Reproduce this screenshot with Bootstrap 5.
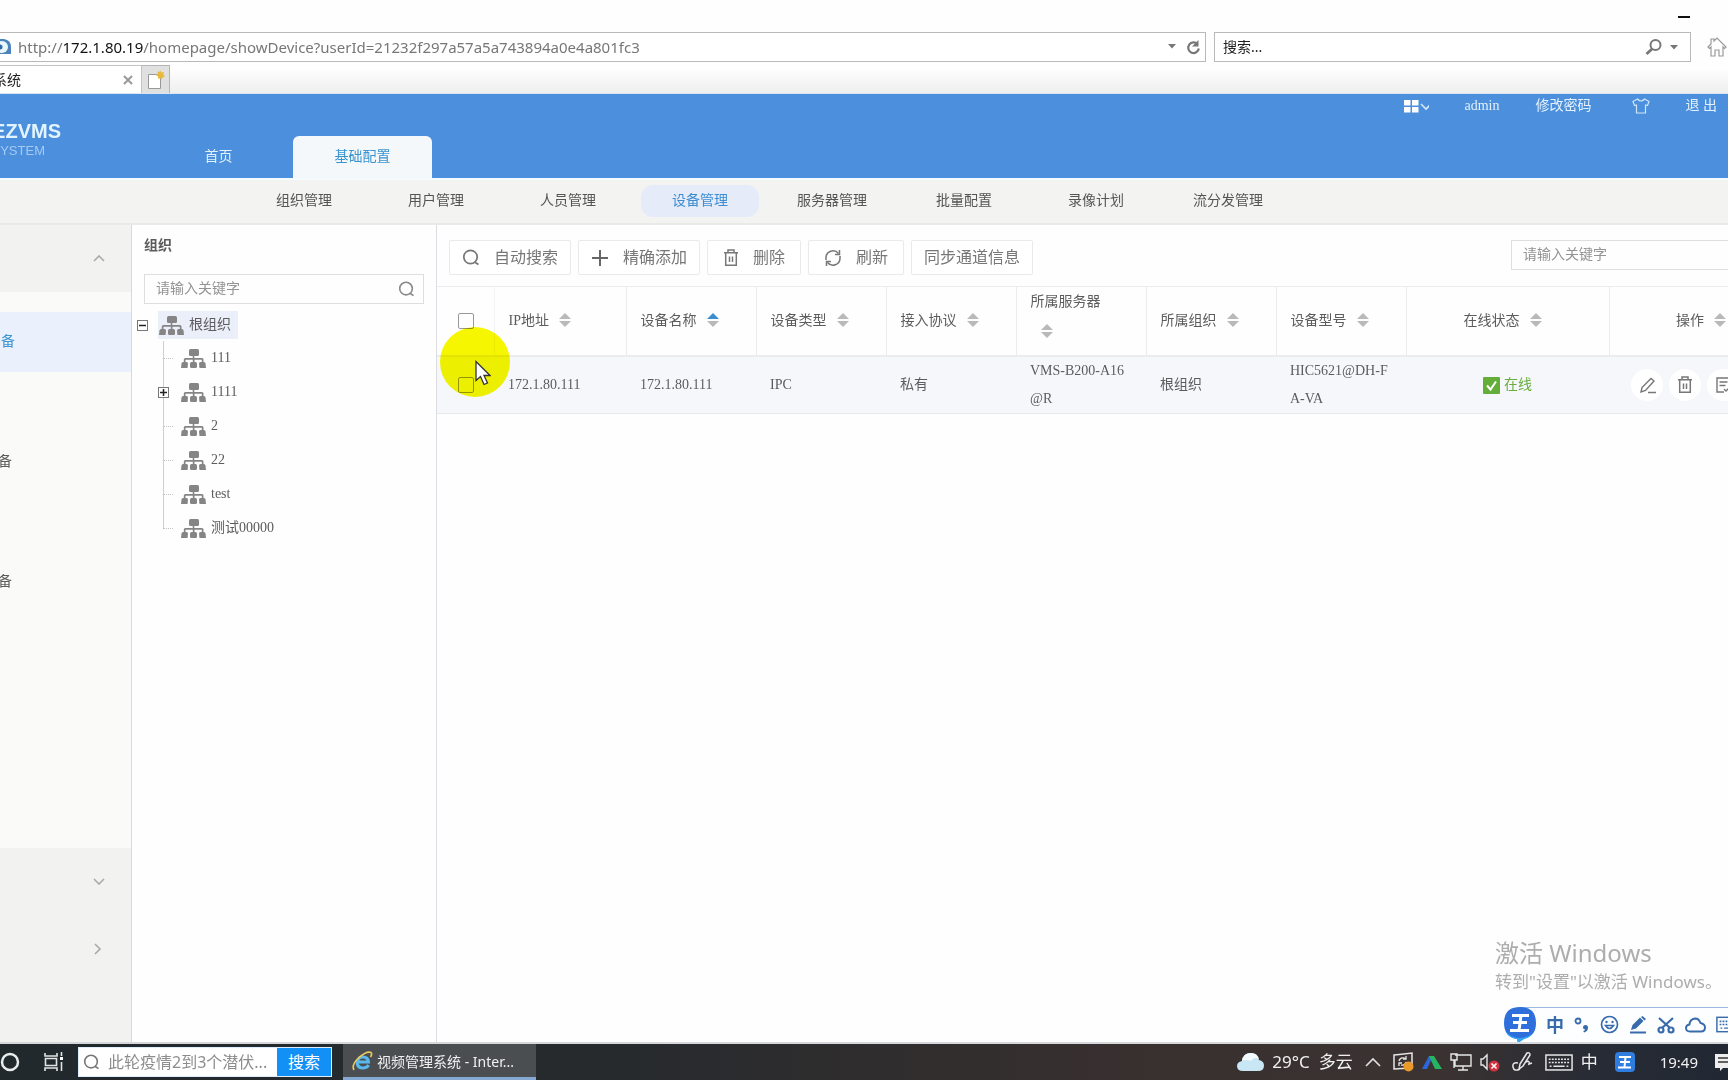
<!DOCTYPE html>
<html lang="zh-CN">
<head>
<meta charset="utf-8">
<meta name="viewport" content="width=device-width, initial-scale=1">
<title>视频管理系统</title>
<link href="https://cdn.jsdelivr.net/npm/bootstrap@5.3.0/dist/css/bootstrap.min.css" rel="stylesheet">
<style>
:root{--ui:"Noto Sans","Noto Sans CJK SC",sans-serif;--web:"Liberation Serif","Noto Sans CJK SC",serif;}
body{font-family:var(--web);font-size:14px;line-height:20px;color:#5c5c5c;background:#fefefe;overflow:hidden}
svg{display:block;flex:none}
a{text-decoration:none;color:inherit}
.plain-btn{border:0;background:none;padding:0;color:inherit}
/* browser chrome */
.chrome{font-family:var(--ui);color:#777}
.title-strip{height:32px;padding-right:38px;padding-top:2px}
.address-row{height:30px;gap:8px}
.address-box{width:1206px;border:1px solid #b9b9b9;border-left:0;background:#fff}
.address-text{font-size:15px;white-space:nowrap;padding-left:6px}
.address-text b{font-weight:400;color:#111}
.find-box{width:477px;border:1px solid #b9b9b9;background:#fff}
.find-box input{color:#222;font-size:14px}
.find-box input::placeholder{color:#222;opacity:1}
.bare{border:0;background:none;padding:0;outline:0;min-width:0}
.tab-row{height:32px;padding-top:3px;background:linear-gradient(#fefefe 20%,#eeeeee);border-bottom:1px solid #d8e6f4}
.page-tab{width:142px;border:1px solid #c4c4c4;border-width:1px 1px 0 0;background:#fff;color:#222;font-size:14px}
.tab-name{width:21px;white-space:nowrap}
.new-tab{width:28px;background:#e0e0e0;border:1px solid #b5b5b5;border-width:1px 1px 0 0}
/* application header */
.app-head{height:84px;background:#4b8fdd;color:#e3f1fb}
.logo-box{width:61px;overflow:hidden;padding-top:25px;font-family:"Liberation Sans",sans-serif}
.logo-name{font-size:20px;line-height:24px;font-weight:700;color:#e2f4ff}
.logo-sub{font-size:13px;line-height:16px;color:#a5c9f1;padding-right:16px}
.main-tabs{padding-left:88px}
.main-tabs a{width:139px;height:42px;border-radius:6px 6px 0 0}
.main-tabs a.current{background:#f5f8fa;color:#3a94cf;margin-left:5px}
.head-tools{height:24px;padding-right:11px;gap:36px}
.sub-bar{height:47px;background:#f3f3f2;border-top:2px solid #f3fbff;border-bottom:2px solid #e9e9e8;padding-left:237px;color:#555}
.sub-bar ul{height:41px}
.sub-bar li{width:132px}
.sub-bar a{height:32px;width:118px;border-radius:12px}
.sub-bar a.current{background:#e5ebf8;color:#3d8dd0}
/* left side */
.side{width:132px;border-right:1px solid #d9d9dc;background:#f2f2f1}
.side-head{height:67px;padding-right:26px;color:#aaa}
.side-list{background:#fafaf9;height:556px;padding-top:20px}
.side-list a{height:60px;margin-bottom:60px;width:100%}
.side-list span{width:12px;overflow:hidden}
.side-list a.current{background:#ebf1fc;color:#3e95cf}
.side-list a.current span{width:15px}
.tree-pane{width:305px;border-right:1px solid #dcdce2;padding:11px 12px 0}
.tree-find{height:30px;border:1px solid #dedede;padding:0 8px 0 11px;margin-top:18px}
.grey-ph::placeholder{color:#939393;opacity:1}
.bare{font-family:inherit;font-size:14px}
.tree{margin:5px 0 0 -7px}
.tree li{height:34px}
.tree .root-row{height:32px}
.root-label{background:#ebeffa;height:28px;padding:0 7px 0 1px;gap:5px;margin-left:10px}
.twig{width:11px;height:11px;border:1px solid #777;background:#fff;color:#111}
.branch{margin-left:26px;background:linear-gradient(#cfcfcf,#cfcfcf) 0 0/1px 100% no-repeat}
.branch li{gap:5px}
.branch li::before{content:"";width:10px;border-top:1px dotted #c4c4c4;margin-right:3px}
.branch li.has-twig::before{display:none}
.branch .twig{margin:0 7px 0 -5px}
.branch li:last-child{background:linear-gradient(#fefefe,#fefefe) 0 100%/1px 50% no-repeat}
/* device pane */
.tool-bar{height:61px;padding:15px 0 11px 12px;gap:7px}
.tool-bar button{font-size:16px;height:35px;border:1px solid #eaeaea;border-radius:2px;background:#fff;color:#777;padding:0 12px;display:flex;align-items:center;gap:14px}
.tool-bar button.roomy{padding:0 15px}
.key-find{width:217px;height:30px;border:1px solid #dedede;border-right:0;padding-left:11px}
.device-table{table-layout:fixed;color:#5c5c5c;--bs-table-color:#5c5c5c;border-top:1px solid #ececec}
.device-table th,.device-table td{padding:0 14px;vertical-align:middle;border:0;font-weight:400}
.device-table th{height:68px;line-height:30px;border-right:1px solid #ececec;white-space:nowrap;background:#fefefe}
.device-table th:last-child{border-right:0;padding:0 2px 0 0}
.device-table th.two-line{padding-bottom:8px}
.device-table th.state{padding-right:24px}
.device-table td{height:56px;line-height:28px;background:#f5f7fa;border-top:2px solid #ebecee;border-bottom:1px solid #e6e8ea;word-break:break-all}
.device-table .pick{padding:0 0 0 21px;border-right-color:#f3f3f3}
.w-pick{width:57px}.w-ip{width:132px}.w-std{width:130px}.w-state{width:203px}
.sort{display:inline-block;vertical-align:-3px;margin-left:10px}
.pick input{appearance:none;width:16px;height:16px;border:1px solid #999;border-radius:2px;background:transparent;display:block;margin:0}
.ops{gap:6px;padding-left:22px}
.ops button{width:32px;height:32px;border-radius:50%;background:#fff;color:#777;flex:none}
.online{color:#69ae3c}
.spot{position:absolute;left:440px;top:327px;width:70px;height:70px;border-radius:50%;background:#f7f700;mix-blend-mode:multiply}
.pointer{position:absolute;left:475px;top:360px}
.watermark{position:absolute;right:0;bottom:86px;width:233px;color:#adadad;font-family:var(--ui);white-space:nowrap}
.watermark div{font-size:24px;line-height:34px}
.watermark p{font-size:17px;line-height:24px;margin:0}
.ime{position:absolute;right:0;bottom:37px;width:224px;height:36px;color:#376bab}
.ime-body{margin-left:16px;padding-left:26px;border-top:1px solid #9db8e0;background:#fdfeff;height:34px;gap:10px;overflow:hidden}
.ime-badge{position:absolute;left:0;top:0}
.ime-word{font:700 18px/20px var(--ui)}
/* taskbar */
.task-bar{height:36px;font-family:var(--ui);color:#f0f0f0;background:linear-gradient(90deg,#22292c 0,#262a2d 35%,#38302f 65%,#3b3331 83%,#262b35 93%,#222833);box-shadow:0 -2px #d5d7da;z-index:2}
.task-find{width:254px;height:30px;background:#fff;margin-left:14px;border:1px solid #dfeefa}
.task-find input{font-size:16px;color:#888;width:0}
.task-find input::placeholder{color:#8d8d8d;opacity:1}
.task-find button{width:54px;background:#1390f5;color:#fff;font-size:16px}
.task-app{width:193px;margin-left:11px;background:#4a4e51;border-bottom:3px solid #86a9d3;font-size:14px;gap:4px;padding:2px 0 0 9px;white-space:nowrap;color:#f0f0f0}
.tray{font-size:17px}
.tray-wide{margin-left:12px}
.tray-clock{font-size:15px;margin-left:24px}
</style>
</head>
<body>
<svg width="0" height="0" class="position-absolute" aria-hidden="true">
  <symbol id="i-org" viewBox="0 0 25 19"><g fill="#858585"><rect x="8" y="0" width="10" height="7" rx="1.5"/><path d="M11.700 6h1.600v3h7.700q1.500 0 1.500 1.500V14h-1.700v-3.200h-7.300V14h-1.700v-3.200H4.500V14H2.800v-3.500Q2.800 9 4.300 9h7.400z"/><path d="M2 13h3.500q1.500 0 1.500 1.500l-.5 4.500H0l.5-4.500Q.7 13 2 13z"/><rect x="9" y="13" width="7" height="6" rx="1.500"/><path d="M19.500 13H23q1.300 0 1.500 1.500l.5 4.500h-6.500L18 14.500q0-1.500 1.500-1.500z"/></g></symbol>
  <symbol id="i-sort" viewBox="0 0 12 16"><path d="M6 1l6 6H0z" class="up"/><path d="M6 15l6-6H0z" fill="#b9b9b9"/></symbol>
  <symbol id="i-search" viewBox="0 0 18 18"><circle cx="8.500" cy="8" r="6.700" fill="none" stroke="currentColor" stroke-width="1.700"/><path d="M12.500 13l4 2.500" stroke="currentColor" stroke-width="1.700"/></symbol>
  <symbol id="i-bin" viewBox="0 0 16 18"><g fill="none" stroke="currentColor" stroke-width="1.500"><path d="M1 3.700h14M5 3.500V1h6v2.500M2.700 4v12.300h10.600V4"/><path d="M6.500 7.500v5.500M9.500 7.500v5.500"/></g></symbol>
  <symbol id="i-kbd" viewBox="0 0 30 18"><rect x="1" y="1" width="28" height="16" fill="none" stroke="currentColor" stroke-width="1.600"/><path d="M4 5.500h22M4 9h22" stroke="currentColor" stroke-width="1.800" stroke-dasharray="2 1.300"/><path d="M5 13h2m2 0h12m2 0h2" stroke="currentColor" stroke-width="1.600"/></symbol>
</svg>

<div class="vh-100 d-flex flex-column position-relative overflow-hidden">
  <header class="chrome">
    <div class="title-strip d-flex justify-content-end align-items-center"><button class="plain-btn" aria-label="最小化"><svg width="12" height="2"><path d="M0 1h12" stroke="#111" stroke-width="2"/></svg></button></div>
    <div class="address-row d-flex">
      <div class="address-box d-flex align-items-center">
        <svg width="12" height="18" viewBox="0 0 12 18"><path d="M0 1h4q7 1 7 8v7H0" fill="#4c83bb"/><circle cx="2" cy="9" r="6" fill="#e9f6fc"/><circle cx="0" cy="9" r="2.500" fill="#2e6ba8"/></svg>
        <div class="address-text flex-grow-1" role="textbox" aria-label="地址" contenteditable="true" spellcheck="false">http://<b>172.1.80.19</b>/homepage/showDevice?userId=21232f297a57a5a743894a0e4a801fc3</div>
        <svg width="10" height="6" class="me-2"><path d="M0 0h8L4 4.500z" fill="#777"/></svg>
        <svg width="15" height="17" viewBox="0 0 15 17" class="me-1"><path d="M11.500 5.200A5.300 5.300 0 1 0 12.800 9.500" fill="none" stroke="#777" stroke-width="2.200"/><path d="M12.500 1v6.500H6z" fill="#777"/></svg>
      </div>
      <div class="find-box d-flex align-items-center px-2">
        <input class="bare flex-grow-1" aria-label="搜索" placeholder="搜索...">
        <svg width="17" height="18" viewBox="0 0 17 18" class="me-2"><circle cx="10.500" cy="7" r="5" fill="none" stroke="#777" stroke-width="2"/><path d="M7 11L1.500 16" stroke="#777" stroke-width="2.800"/></svg>
        <svg width="8" height="5" class="me-1"><path d="M0 0h8L4 4.500z" fill="#777"/></svg>
      </div>
      <svg width="20" height="20" viewBox="0 0 20 20" class="align-self-center ms-2"><path d="M1 10l3-3V2h3v2l3-3 9 9-1.500 1.500L16 10v9h-4v-6H8v6H4v-9l-1.500 1.500z" fill="none" stroke="#999" stroke-width="1.200"/></svg>
    </div>
    <div class="tab-row d-flex">
      <div class="page-tab d-flex align-items-center justify-content-between pe-1"><span class="tab-name overflow-hidden d-flex justify-content-end">视频管理系统</span><button class="plain-btn pe-1" aria-label="关闭标签页"><svg width="10" height="10"><path d="M1 1l8 8M9 1l-8 8" stroke="#999" stroke-width="2"/></svg></button></div>
      <button class="plain-btn new-tab d-flex align-items-center justify-content-center" aria-label="新建标签页"><svg width="18" height="20" viewBox="0 0 18 20"><path d="M1.500 4.500h12v14h-12z" fill="#fff" stroke="#999"/><path d="M13 0l1.300 2.400L17 2l-.7 2.600L18 6.500l-2.500 1-.8 2-1.700-1.200-2 .7.100-2.300L9 5l1.800-1.200L10.500 1.500l2 .4z" fill="#e8b93f"/></svg></button>
    </div>
  </header>

  <div class="app-head d-flex">
    <div class="logo-box d-flex flex-column align-items-end"><div class="logo-name">EZVMS</div><div class="logo-sub">SYSTEM</div></div>
    <nav class="main-tabs d-flex align-items-end flex-grow-1" aria-label="主导航">
      <a href="#" class="d-flex align-items-center justify-content-center">首页</a>
      <a href="#" class="current d-flex align-items-center justify-content-center" aria-current="page">基础配置</a>
    </nav>
    <div class="head-tools d-flex align-items-center">
      <button class="plain-btn d-flex align-items-center" aria-label="应用"><svg width="25" height="14" viewBox="0 0 25 14"><path d="M0 1h6.500v5.500H0zM8 1h6.500v5.500H8zM0 8h6.500v5.500H0zM8 8h6.500v5.500H8z" fill="#fff"/><path d="M18 5l5 5 5-5" fill="none" stroke="#d5e8f8" stroke-width="1.600" transform="translate(-1 0)"/></svg></button>
      <a href="#">admin</a>
      <a href="#" class="me-1">修改密码</a>
      <button class="plain-btn" aria-label="换肤"><svg width="18" height="16" viewBox="0 0 18 16"><path d="M5.500 1L1 3.500l1.500 4L4.500 7v8h9V7l2 .5 1.500-4L12.500 1Q9 5 5.500 1z" fill="none" stroke="#cfe5f8" stroke-width="1.200"/></svg></button>
      <a href="#">退 出</a>
    </div>
  </div>
  <nav class="sub-bar" aria-label="配置导航">
    <ul class="list-unstyled d-flex align-items-center m-0">
      <li><a href="#" class="d-flex align-items-center justify-content-center mx-2">组织管理</a></li>
      <li><a href="#" class="d-flex align-items-center justify-content-center mx-2">用户管理</a></li>
      <li><a href="#" class="d-flex align-items-center justify-content-center mx-2">人员管理</a></li>
      <li><a href="#" class="current d-flex align-items-center justify-content-center mx-2" aria-current="page">设备管理</a></li>
      <li><a href="#" class="d-flex align-items-center justify-content-center mx-2">服务器管理</a></li>
      <li><a href="#" class="d-flex align-items-center justify-content-center mx-2">批量配置</a></li>
      <li><a href="#" class="d-flex align-items-center justify-content-center mx-2">录像计划</a></li>
      <li><a href="#" class="d-flex align-items-center justify-content-center mx-2">流分发管理</a></li>
    </ul>
  </nav>

  <div class="d-flex flex-grow-1 overflow-hidden">
    <aside class="side flex-shrink-0">
      <button class="plain-btn side-head w-100 d-flex align-items-center justify-content-end" aria-label="收起"><svg width="12" height="7"><path d="M1 6l5-5 5 5" fill="none" stroke="#aaa" stroke-width="1.600"/></svg></button>
      <nav class="side-list" aria-label="设备分类">
        <a href="#" class="current d-flex align-items-center"><span class="d-flex justify-content-end">备</span></a>
        <a href="#" class="d-flex align-items-center"><span class="d-flex justify-content-end">备</span></a>
        <a href="#" class="d-flex align-items-center"><span class="d-flex justify-content-end">备</span></a>
      </nav>
      <button class="plain-btn side-head w-100 d-flex align-items-center justify-content-end" aria-label="展开"><svg width="12" height="7"><path d="M1 1l5 5 5-5" fill="none" stroke="#aaa" stroke-width="1.600"/></svg></button>
      <button class="plain-btn side-head w-100 d-flex align-items-center justify-content-end" aria-label="进入"><svg width="11" height="12"><path d="M1 1l5 5-5 5" fill="none" stroke="#aaa" stroke-width="1.600"/></svg></button>
    </aside>

    <section class="tree-pane flex-shrink-0">
      <div class="fw-bold">组织</div>
      <div class="tree-find d-flex align-items-center"><input class="bare grey-ph flex-grow-1" aria-label="搜索组织" placeholder="请输入关键字"><svg width="17" height="17" color="#888"><use href="#i-search"/></svg></div>
      <div class="tree">
        <div class="root-row d-flex align-items-center">
          <button class="plain-btn twig d-flex align-items-center justify-content-center" aria-label="收起根组织"><svg width="7" height="7"><path d="M0 3.500h7" stroke="#222" stroke-width="1.500"/></svg></button>
          <a href="#" class="root-label d-flex align-items-center"><svg width="25" height="19"><use href="#i-org"/></svg>根组织</a>
        </div>
        <ul class="branch list-unstyled mb-0">
          <li class="d-flex align-items-center"><svg width="25" height="19"><use href="#i-org"/></svg><a href="#">111</a></li>
          <li class="d-flex align-items-center has-twig"><button class="plain-btn twig d-flex align-items-center justify-content-center" aria-label="展开1111"><svg width="7" height="7"><path d="M0 3.500h7M3.500 0v7" stroke="#222" stroke-width="1.500"/></svg></button><svg width="25" height="19"><use href="#i-org"/></svg><a href="#">1111</a></li>
          <li class="d-flex align-items-center"><svg width="25" height="19"><use href="#i-org"/></svg><a href="#">2</a></li>
          <li class="d-flex align-items-center"><svg width="25" height="19"><use href="#i-org"/></svg><a href="#">22</a></li>
          <li class="d-flex align-items-center"><svg width="25" height="19"><use href="#i-org"/></svg><a href="#">test</a></li>
          <li class="d-flex align-items-center"><svg width="25" height="19"><use href="#i-org"/></svg><a href="#">测试00000</a></li>
        </ul>
      </div>
    </section>

    <main class="flex-grow-1 overflow-hidden">
      <div class="tool-bar d-flex">
        <button><svg width="18" height="18"><use href="#i-search"/></svg>自动搜索</button>
        <button><svg width="18" height="18"><path d="M9 1v16M1 9h16" stroke="#666" stroke-width="2"/></svg>精确添加</button>
        <button class="roomy"><svg width="16" height="18"><use href="#i-bin"/></svg>删除</button>
        <button class="roomy"><svg width="18" height="18" viewBox="0 0 18 18"><g fill="none" stroke="currentColor" stroke-width="1.500"><path d="M2 11V9a7 7 0 0 1 12.500-4.500M16 7v2a7 7 0 0 1-12.500 4.500"/><path d="M15.500 1v4.500H11M2.500 17v-4.500H7"/></g></svg>刷新</button>
        <button>同步通道信息</button>
        <div class="key-find ms-auto d-flex align-items-center"><input class="bare grey-ph w-100" aria-label="搜索设备" placeholder="请输入关键字"></div>
      </div>
      <table class="table device-table mb-0">
        <colgroup><col class="w-pick"><col class="w-ip"><col class="w-std"><col class="w-std"><col class="w-std"><col class="w-std"><col class="w-std"><col class="w-std"><col class="w-state"><col></colgroup>
        <thead><tr>
          <th class="pick"><input type="checkbox" aria-label="全选"></th>
          <th scope="col">IP地址<svg class="sort" width="12" height="16" fill="#b9b9b9"><use href="#i-sort"/></svg></th>
          <th scope="col">设备名称<svg class="sort" width="12" height="16" fill="#3b8fd0"><use href="#i-sort"/></svg></th>
          <th scope="col">设备类型<svg class="sort" width="12" height="16" fill="#b9b9b9"><use href="#i-sort"/></svg></th>
          <th scope="col">接入协议<svg class="sort" width="12" height="16" fill="#b9b9b9"><use href="#i-sort"/></svg></th>
          <th scope="col" class="two-line">所属服务器<br><svg class="sort" width="12" height="16" fill="#b9b9b9"><use href="#i-sort"/></svg></th>
          <th scope="col">所属组织<svg class="sort" width="12" height="16" fill="#b9b9b9"><use href="#i-sort"/></svg></th>
          <th scope="col">设备型号<svg class="sort" width="12" height="16" fill="#b9b9b9"><use href="#i-sort"/></svg></th>
          <th scope="col" class="text-center state">在线状态<svg class="sort" width="12" height="16" fill="#b9b9b9"><use href="#i-sort"/></svg></th>
          <th scope="col" class="text-end">操作<svg class="sort" width="12" height="16" fill="#b9b9b9"><use href="#i-sort"/></svg></th>
        </tr></thead>
        <tbody><tr>
          <td class="pick"><input type="checkbox" aria-label="选择 172.1.80.111"></td>
          <td>172.1.80.111</td><td>172.1.80.111</td><td>IPC</td><td>私有</td><td>VMS-B200-A16@R</td><td>根组织</td><td>HIC5621@DH-FA-VA</td>
          <td><div class="online d-flex align-items-center justify-content-center"><svg width="17" height="17" class="me-1"><rect width="17" height="17" rx="1" fill="#63ad38"/><path d="M4 8.500l3.500 4L13 4.500" fill="none" stroke="#fff" stroke-width="2"/></svg>在线</div></td>
          <td class="p-0"><div class="ops d-flex overflow-hidden">
            <button class="plain-btn d-flex align-items-center justify-content-center" aria-label="编辑"><svg width="17" height="17" viewBox="0 0 17 17"><path d="M2 15l1-4.500L12 1.500l3 2.500-8.500 9.500zM9 15.500h8" fill="none" stroke="currentColor" stroke-width="1.400"/></svg></button>
            <button class="plain-btn d-flex align-items-center justify-content-center" aria-label="删除"><svg width="16" height="18"><use href="#i-bin"/></svg></button>
            <button class="plain-btn d-flex align-items-center justify-content-center" aria-label="详情"><svg width="16" height="16" viewBox="0 0 16 16"><path d="M15 9V1H2v14h7M4.500 5h8M4.500 8.500h6M9 12l2 2 4-4" fill="none" stroke="currentColor" stroke-width="1.400"/></svg></button>
          </div></td>
        </tr></tbody>
      </table>
    </main>
  </div>

  <div class="spot"></div>
  <svg class="pointer" width="16" height="26" viewBox="0 0 16 26"><path d="M1 1.500v19l4.500-4 3.500 8 3.500-1.500L9 15.500h6z" fill="#fff" stroke="#333" stroke-width="1.300"/></svg>
  <div class="watermark"><div>激活 Windows</div><p>转到"设置"以激活 Windows。</p></div>
  <div class="ime">
    <div class="ime-body d-flex align-items-center">
      <span class="ime-word">中</span>
      <svg width="16" height="18" viewBox="0 0 16 18"><circle cx="4" cy="5" r="2.500" fill="none" stroke="#376bab" stroke-width="1.800"/><path d="M9 11.500a2.500 2.500 0 1 1 5 0q0 4-4 5l-.7-1.500q1.800-.6 2-1.500-2.300-.2-2.300-2z" fill="#376bab"/></svg>
      <svg width="19" height="19" viewBox="0 0 19 19"><g fill="none" stroke="#376bab" stroke-width="1.700"><circle cx="9.500" cy="9.500" r="8"/><path d="M5.500 10.500q4 6 8 0z"/></g><circle cx="6.500" cy="7" r="1.200" fill="#376bab"/><circle cx="12.500" cy="7" r="1.200" fill="#376bab"/></svg>
      <svg width="18" height="18" viewBox="0 0 18 18"><path d="M2 14l1.500-5L11 1.500l3.500 3.500L7 12.500zM12 1l1.500-1L17 3l-1.500 1.500zM1 15.500h16V17.500H1z" fill="#376bab"/></svg>
      <svg width="18" height="18" viewBox="0 0 18 18"><g fill="none" stroke="#376bab" stroke-width="2.200"><path d="M2 2l11 10M16 2L5 12"/><circle cx="4" cy="14" r="2.500"/><circle cx="14" cy="14" r="2.500"/></g></svg>
      <svg width="21" height="16" viewBox="0 0 21 16"><path d="M5 14.500q-4 0-4-3.500 0-3 3.500-3.500Q5 2 10 1.500q4 0 5.500 4.500Q20 7 20 10.500q0 4-4 4z" fill="none" stroke="#376bab" stroke-width="1.900"/></svg>
      <svg width="27" height="17" color="#376bab" viewBox="0 0 27 17"><use href="#i-kbd" width="27" height="17"/></svg>
    </div>
    <svg class="ime-badge" width="32" height="36" viewBox="0 0 32 36"><path d="M16 0Q32 0 32 16 32 29 21 31l-7 5-1-4Q0 30 0 16 0 0 16 0z" fill="#2f6fdc"/><path d="M2 25q6 6 14 6 7 0 13-5-3 5-9 6l-6 4-1-4Q5 31 2 25z" fill="#35a6f2"/><path d="M8 8.500h17M9 15.500h14M6 23.500h19M17 8.500l-2 15" stroke="#fff" stroke-width="3"/></svg>
  </div>

  <footer class="task-bar d-flex flex-shrink-0">
    <div class="d-flex align-items-center">
      <svg width="20" height="20" viewBox="0 0 20 20"><circle cx="10" cy="10" r="8" fill="none" stroke="#e9ecec" stroke-width="2.500"/></svg>
      <svg width="20" height="20" viewBox="0 0 20 20" class="ms-4"><path d="M1 1v3h12V1M1 19v-3h12v3M1.500 6.500h11v7h-11zM17.500 0v4M17.500 10v9" fill="none" stroke="#e0e4e4" stroke-width="1.600"/><path d="M16 5h3v3h-3z" fill="#fff"/></svg>
      <div class="task-find d-flex align-items-stretch"><svg width="17" height="17" color="#777" class="align-self-center ms-1 me-2"><use href="#i-search"/></svg><input class="bare flex-grow-1" aria-label="桌面搜索" placeholder="此轮疫情2到3个潜伏..."><button class="plain-btn flex-shrink-0">搜索</button></div>
    </div>
    <button class="plain-btn task-app d-flex align-items-center"><svg width="21" height="21" viewBox="0 0 21 21"><path d="M4.500 11h12Q16 6 11 6t-6 5.500Q5.500 17 11 17q4 0 5.500-3" fill="none" stroke="#5bb8ec" stroke-width="3"/><path d="M2 19Q-1 14 7 6.500 15-.5 19 1.500q1.500 1.500-.5 4.500" fill="none" stroke="#e7c85a" stroke-width="1.700"/></svg>视频管理系统 - Inter...</button>
    <div class="tray d-flex align-items-center ms-auto">
      <svg width="27" height="20" viewBox="0 0 27 20"><path d="M6 19q-6 0-6-5 0-4 5-5 1-8 9-8 7 0 8 7 5 1 5 5.500 0 5.500-6 5.500z" fill="#c9e6f5"/><path d="M5 9q1-8 9-8 6 0 8 6-5-3-8 2-5-2-9 0z" fill="#f3fbff"/></svg>
      <span class="ms-2 text-nowrap">29°C&nbsp; 多云</span>
      <svg width="16" height="10" class="tray-wide"><path d="M1 9l7-7 7 7" fill="none" stroke="#e0e0e0" stroke-width="1.600"/></svg>
      <svg width="21" height="20" viewBox="0 0 21 20" class="tray-wide"><path d="M1 3l18-2v15L1 17z" fill="none" stroke="#e6e6e6" stroke-width="1.500"/><path d="M6 9q1-4 5-3l2 1M13 4v3h-3M13 10q-1 4-5 3M6 14v-3h3" fill="none" stroke="#e6e6e6" stroke-width="1.300"/><circle cx="15.500" cy="14.500" r="5" fill="#eb9a2a"/></svg>
      <svg width="20" height="16" viewBox="0 0 20 16" class="ms-2"><path d="M0 15L7 2h4L5 15z" fill="#2b67d8"/><path d="M7 2h5l8 13h-7z" fill="#25b560"/></svg>
      <svg width="22" height="18" viewBox="0 0 22 18" class="ms-2"><path d="M5 2h16v11H5V7M13 13v4M8 17h10M1 1h6v6H1zM4 7v8" fill="none" stroke="#e6e6e6" stroke-width="1.400"/></svg>
      <svg width="20" height="19" viewBox="0 0 20 19" class="ms-2"><path d="M1 6h2l4-4v14l-4-4H1z" fill="none" stroke="#e6e6e6" stroke-width="1.400"/><circle cx="14" cy="13" r="5.500" fill="#d3313f"/><path d="M11.500 10.500l5 5M16.500 10.500l-5 5" stroke="#fff" stroke-width="1.600"/></svg>
      <svg width="21" height="20" viewBox="0 0 21 20" class="tray-wide"><path d="M8 12L15 1q3-1 3 2l-7 11-4 3zM6 11q-6-1-5 4t7 2M14 10q4-2 3 2l3-1" fill="none" stroke="#e6e6e6" stroke-width="1.500"/></svg>
      <svg width="28" height="17" class="tray-wide" color="#e6e6e6"><use href="#i-kbd"/></svg>
      <span class="ms-2">中</span>
      <svg width="22" height="22" viewBox="0 0 22 22" class="ms-3"><rect x="1" y="1" width="20" height="20" rx="4" fill="#2f7de0"/><path d="M5 6h12M6 11h10M4 16.500h13M11.500 6l-1 10" stroke="#fff" stroke-width="2"/></svg>
      <span class="tray-clock">19:49</span>
      <svg width="14" height="20" viewBox="0 0 14 20" class="ms-3"><path d="M1 2h13v14H9l-3 3v-3H1z" fill="#eee"/><path d="M4 6h10M4 10h10" stroke="#333" stroke-width="1.500"/></svg>
    </div>
  </footer>
</div>
<script src="https://cdn.jsdelivr.net/npm/bootstrap@5.3.0/dist/js/bootstrap.bundle.min.js"></script>
</body>
</html>
